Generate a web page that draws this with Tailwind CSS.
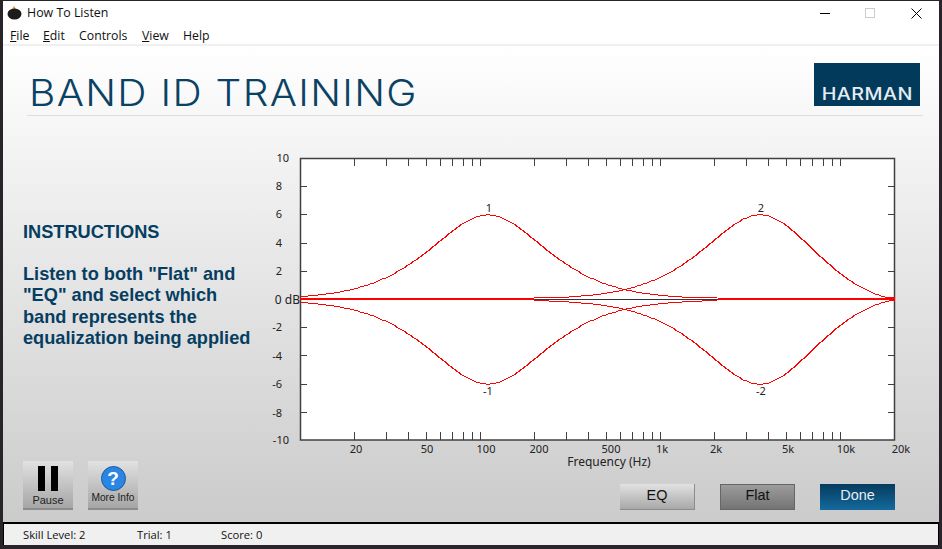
<!DOCTYPE html>
<html>
<head>
<meta charset="utf-8">
<script src="https://cdn.jsdelivr.net/npm/@tailwindcss/browser@4"></script>
</head>
<body class="w-[942px] h-[549px] overflow-hidden bg-[#29242a]">
<div class="ml-[3px] mt-[1px] w-[936px] h-[544px] flex flex-col bg-white font-['Open_Sans',sans-serif] text-black">
  <!-- title bar -->
  <div class="h-[24px] flex items-center shrink-0 relative">
    <svg class="ml-[4px] w-[15px] h-[14px]" viewBox="0 0 15 14"><path d="M7 0l2 3H5z" fill="#e0a040"/><ellipse cx="7.5" cy="8" rx="7" ry="5.5" fill="#1c1c1c"/></svg>
    <span class="ml-[5px] text-[12.4px] leading-none text-[#111]">How To Listen</span>
    <div class="ml-auto flex items-center">
      <svg class="w-[10px] h-[10px] mr-[35px]" viewBox="0 0 10 10"><path d="M0 5.5h10" stroke="#000" stroke-width="1"/></svg>
      <svg class="w-[10px] h-[10px] mr-[36px]" viewBox="0 0 10 10"><rect x=".5" y=".5" width="9" height="9" fill="none" stroke="#ccc"/></svg>
      <svg class="w-[11px] h-[11px] mr-[17px]" viewBox="0 0 11 11"><path d="M.5.5l10 10M10.5.5l-10 10" stroke="#000" stroke-width="1"/></svg>
    </div>
  </div>
  <!-- menu -->
  <div class="h-[21px] flex items-center shrink-0 pl-[7px] pt-[3px] border-b-2 border-[#f0f0f0] text-[12.3px] text-[#111]">
    <span class="w-[33px]"><u>F</u>ile</span>
    <span class="w-[36px]"><u>E</u>dit</span>
    <span class="w-[63px]">Controls</span>
    <span class="w-[41px]"><u>V</u>iew</span>
    <span>Help</span>
  </div>
  <!-- client -->
  <div class="flex-1 flex flex-col bg-gradient-to-b from-white to-[#cbcbcb] min-h-0">
    <!-- header -->
    <div class="h-[70px] shrink-0 mx-[24px] mr-[16px] border-b border-[#dedede] flex items-start relative">
      <h1 class="mt-[25px] ml-[2px] text-[37px] leading-[44px] font-light tracking-[1.2px] origin-left scale-x-[1.095] text-[#0a4263] font-['Inter',sans-serif] whitespace-nowrap">BAND ID TRAINING</h1>
      <div class="ml-auto mt-[17px] mr-[3px] w-[106px] h-[43px] bg-[#023a5c] flex items-end justify-center pb-[2px]">
        <span class="text-[17px] leading-[20px] font-medium tracking-[0.4px] scale-x-[1.16] text-[#e6edf2] font-['Inter',sans-serif]">HARMAN</span>
      </div>
    </div>
    <!-- body -->
    <div class="flex-1 flex min-h-0">
      <div class="w-[267px] shrink-0 flex flex-col pl-[20px] font-['Liberation_Sans',sans-serif]">
        <div class="mt-[106px] text-[18.2px] leading-[21.2px] font-bold text-[#063e62]">
          <p>INSTRUCTIONS</p>
          <p class="mt-[21px] whitespace-nowrap">Listen to both "Flat" and<br>"EQ" and select which<br>band represents the<br>equalization being applied</p>
        </div>
        <div class="mt-auto mb-[12px] flex gap-[15px]">
          <div class="w-[50px] h-[49px] bg-gradient-to-b from-[#e2e2e2] to-[#a6a6a6] border-b-2 border-[#8c8c8c] flex flex-col items-center pt-[5px]">
            <div class="flex gap-[6px]"><div class="w-[7px] h-[25px] bg-black"></div><div class="w-[7px] h-[25px] bg-black"></div></div>
            <span class="mt-[3px] text-[11px] leading-[12px] text-[#222]">Pause</span>
          </div>
          <div class="w-[50px] h-[49px] bg-gradient-to-b from-[#e2e2e2] to-[#a6a6a6] border-b-2 border-[#8c8c8c] flex flex-col items-center pt-[5px]">
            <div class="w-[25px] h-[25px] rounded-full bg-[#2a86e2] border border-[#1a5a9e] flex items-center justify-center text-white text-[19px] font-bold leading-none">?</div>
            <span class="mt-[1px] text-[10.2px] leading-[12px] text-[#222] whitespace-nowrap">More Info</span>
          </div>
        </div>
      </div>
      <div class="flex-1 flex flex-col">
        <svg id="chart" class="mt-[34px] w-[666px] h-[320px] shrink-0" viewBox="270 150 666 320" font-family="'Noto Sans',sans-serif" font-size="11" fill="#222">
          <rect x="300.5" y="158.5" width="594" height="281.5" fill="#fff" stroke="#404040" stroke-width="1.5"/>
          <path id="ticks" stroke="#404040" stroke-width="1" fill="none" shape-rendering="crispEdges" d=""/>
          <g text-anchor="end">
            <text x="289" y="162">10</text><text x="282" y="190">8</text><text x="282" y="218">6</text><text x="282" y="247">4</text><text x="282" y="275">2</text>
            <text x="282" y="331">-2</text><text x="282" y="360">-4</text><text x="282" y="388">-6</text><text x="282" y="417">-8</text><text x="289" y="444">-10</text>
            <text x="300" y="303.5" font-size="12">0 dB</text>
          </g>
          <g text-anchor="middle">
            <text x="356" y="453">20</text><text x="427" y="453">50</text><text x="486" y="453">100</text><text x="539" y="453">200</text><text x="611" y="453">500</text><text x="662" y="453">1k</text><text x="716" y="453">2k</text><text x="788" y="453">5k</text><text x="846" y="453">10k</text><text x="901" y="453">20k</text>
            <text x="609" y="466" font-size="12">Frequency (Hz)</text>
            <text x="489" y="212">1</text><text x="761" y="212">2</text><text x="488" y="395">-1</text><text x="761" y="395">-2</text>
          </g>
          <rect x="534" y="299" width="184" height="1" fill="#333" shape-rendering="crispEdges"/>
          <g fill="none" stroke="#f00" stroke-width="1" shape-rendering="crispEdges">
            <polyline id="c1"/><polyline id="c2"/><polyline id="c3"/><polyline id="c4"/>
          </g>
          <rect x="300" y="298" width="234" height="2" fill="#f00"/>
          <rect x="718" y="298" width="177" height="2" fill="#f00"/>
          <rect x="889" y="297" width="6" height="4" fill="#f00"/>
        </svg>
        <div class="mt-[14px] flex gap-[25px] ml-[350px] font-['Liberation_Sans',sans-serif] text-[14.4px]">
          <div class="w-[75px] h-[26px] pb-[2px] flex items-center justify-center bg-gradient-to-b from-[#e2e2e2] to-[#a8a8a8] border-b border-r border-[#8c8c8c] text-[#111]">EQ</div>
          <div class="w-[75px] h-[26px] pb-[2px] flex items-center justify-center bg-gradient-to-b from-[#9c9c9c] to-[#747474] border border-[#666] text-[#111]">Flat</div>
          <div class="w-[75px] h-[26px] pb-[2px] flex items-center justify-center bg-gradient-to-b from-[#063c5e] to-[#156a9e] text-[#e8eef2]">Done</div>
        </div>
      </div>
    </div>
  </div>
  <!-- status -->
  <div class="h-[23px] shrink-0 border-t-2 border-l border-r border-black bg-[#f0f0f0] flex items-center pl-[19px] pt-[1px] text-[11.2px] text-[#111]">
    <span class="w-[114px]">Skill Level: 2</span>
    <span class="w-[84px]">Trial: 1</span>
    <span>Score: 0</span>
  </div>
</div>
<script>
  var x0 = 354.3, perDec = 180, fs = 44100;
  function fx(f){ return x0 + perDec*Math.log10(f/20); }
  function xf(x){ return 20*Math.pow(10,(x-x0)/perDec); }
  function db(f, f0, g){
    var A = Math.pow(10, g/40), Q = 0.505;
    var w = Math.tan(Math.PI*f/fs)/Math.tan(Math.PI*f0/fs);
    var a = (1-w*w)*(1-w*w), b = (w/Q)*(w/Q);
    return 10*Math.log10((a + b*A*A)/(a + b/(A*A)));
  }
  function curve(id, x1, x2, f0, g){
    var pts = [];
    var s = g > 0 ? 1 : -1;
    for (var x = x1; x <= x2; x += 2) {
      var off = Math.max(s > 0 ? 2 : 1, Math.round(14.1*Math.abs(db(xf(x), f0, g))));
      pts.push(x + ',' + (s > 0 ? 299 - off + 0.5 : 299 + off + 0.5));
    }
    document.getElementById(id).setAttribute('points', pts.join(' '));
  }
  curve('c1', 301, 718, 110.6, 6);
  curve('c2', 301, 718, 110.6, -6);
  curve('c3', 534, 893, 3590, 6);
  curve('c4', 534, 893, 3590, -6);
  var d = '', i, j, x;
  [10,100,1000,10000].forEach(function(dec){
    for (j = 1; j <= 9; j++) {
      var f = dec*j;
      if (f <= 10 || f >= 20000) continue;
      x = Math.round(fx(f)) + 0.5;
      d += 'M'+x+' 158V166M'+x+' 440V432';
    }
  });
  for (i = 1; i < 10; i++) {
    var y = Math.round(158 + i*28.2) + 0.5;
    if (i === 5) continue;
    d += 'M300 '+y+'H307M888 '+y+'H895';
  }
  document.getElementById('ticks').setAttribute('d', d);
</script>
</body>
</html>
